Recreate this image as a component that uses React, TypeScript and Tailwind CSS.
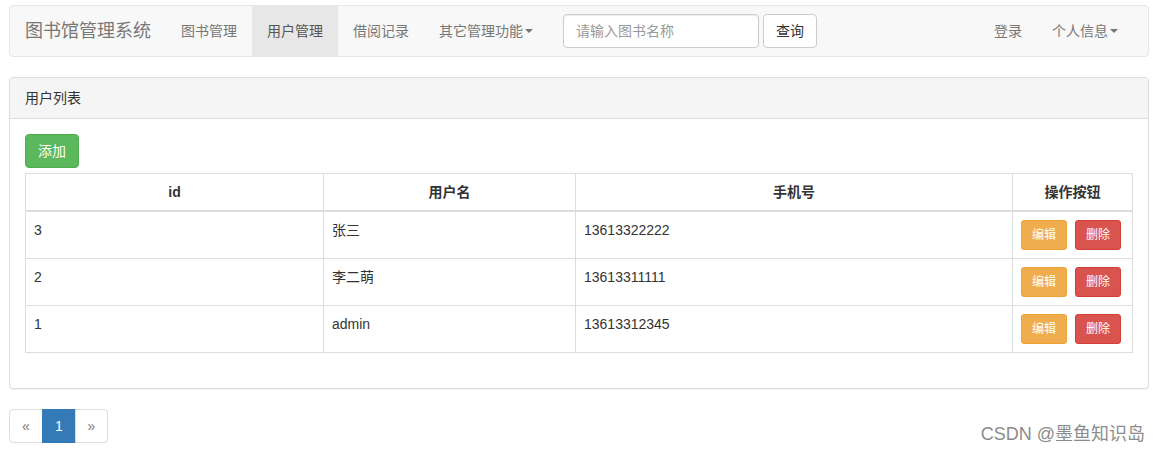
import React from "react";

const users = [
    { id: 3, name: "张三", phone: "13613322222" },
    { id: 2, name: "李二萌", phone: "13613311111" },
    { id: 1, name: "admin", phone: "13613312345" },
];

function Caret() {
    return <span className="inline-block ml-[2px] w-0 h-0 border-t-[4px] border-t-[#777] border-x-[4px] border-x-transparent align-middle"></span>;
}

function NavLink({ children, active }: { children: React.ReactNode; active?: boolean }) {
    return (
        <div className={`h-[50px] flex items-center px-[15px] ${active ? "bg-[#e7e7e7] text-[#555]" : "text-[#777]"}`}>
            {children}
        </div>
    );
}

function Navbar() {
    return (
        <div className="h-[52px] border border-[#e7e7e7] bg-[#f8f8f8] rounded-[4px] flex items-stretch">
            <div className="h-[50px] flex items-center px-[15px] text-[18px] text-[#777]">图书馆管理系统</div>
            <NavLink>图书管理</NavLink>
            <NavLink active>用户管理</NavLink>
            <NavLink>借阅记录</NavLink>
            <NavLink>
                其它管理功能
                <Caret />
            </NavLink>
            <div className="flex items-center px-[15px] gap-[4px]">
                <input
                    placeholder="请输入图书名称"
                    className="w-[196px] h-[34px] px-[12px] border border-[#ccc] rounded-[4px] bg-white text-[14px] text-[#555] placeholder:text-[#999] outline-none shadow-[inset_0_1px_1px_rgba(0,0,0,0.075)]"
                />
                <button className="h-[34px] px-[12px] border border-[#ccc] rounded-[4px] bg-white text-[14px] text-[#333]">查询</button>
            </div>
            <div className="ml-auto flex pr-[15px]">
                <NavLink>登录</NavLink>
                <NavLink>
                    个人信息
                    <Caret />
                </NavLink>
            </div>
        </div>
    );
}

function UserTable() {
    return (
        <table className="w-full table-fixed border-collapse border border-[#ddd] text-[14px] leading-[20px]">
            <colgroup>
                <col className="w-[298px]" />
                <col className="w-[252px]" />
                <col className="w-[437px]" />
                <col className="w-[120px]" />
            </colgroup>
            <thead>
                <tr>
                    {["id", "用户名", "手机号", "操作按钮"].map((h) => (
                        <th key={h} className="border border-[#ddd] border-b-2 p-[8px] text-center font-bold text-[#333]">
                            {h}
                        </th>
                    ))}
                </tr>
            </thead>
            <tbody>
                {users.map((u) => (
                    <tr key={u.id}>
                        <td className="border border-[#ddd] p-[8px] align-top h-[47px]">{u.id}</td>
                        <td className="border border-[#ddd] p-[8px] align-top">{u.name}</td>
                        <td className="border border-[#ddd] p-[8px] align-top">{u.phone}</td>
                        <td className="border border-[#ddd] p-[8px] align-top">
                            <div className="flex">
                                <button className="h-[30px] px-[10px] text-[12px] text-white bg-[#f0ad4e] border border-[#eea236] rounded-[3px]">编辑</button>
                                <button className="ml-[8px] h-[30px] px-[10px] text-[12px] text-white bg-[#d9534f] border border-[#d43f3a] rounded-[3px]">删除</button>
                            </div>
                        </td>
                    </tr>
                ))}
            </tbody>
        </table>
    );
}

function Pagination() {
    return (
        <div className="flex h-[34px] text-[14px]">
            <div className="w-[34px] flex items-center justify-center border border-[#ddd] rounded-l-[4px] text-[#777] bg-white">«</div>
            <div className="w-[34px] flex items-center justify-center border border-[#337ab7] bg-[#337ab7] text-white -ml-px">1</div>
            <div className="w-[33px] flex items-center justify-center border border-[#ddd] rounded-r-[4px] text-[#777] bg-white -ml-px">»</div>
        </div>
    );
}

export default function App() {
    return (
        <div
            className="relative min-h-[456px] bg-white text-[14px] text-[#333] leading-[20px] pt-[5px] pl-[9px] pr-[10px]"
            style={{ fontFamily: '"Liberation Sans", "Noto Sans CJK SC", sans-serif' }}
        >
            <Navbar />
            <div className="mt-[20px] border border-[#ddd] rounded-[4px] bg-white shadow-[0_1px_1px_rgba(0,0,0,0.05)]">
                <div className="bg-[#f5f5f5] border-b border-[#ddd] px-[15px] py-[10px] rounded-t-[3px]">用户列表</div>
                <div className="p-[15px]">
                    <div className="h-[39px]">
                        <button className="h-[34px] px-[12px] text-[14px] text-white bg-[#5cb85c] border border-[#4cae4c] rounded-[4px]">添加</button>
                    </div>
                    <UserTable />
                    <div className="h-[20px]"></div>
                </div>
            </div>
            <div className="mt-[20px]">
                <Pagination />
            </div>
            <div className="absolute right-[14px] bottom-[12px] text-[18px] leading-[20px] text-[#8c8c8c]">CSDN @墨鱼知识岛</div>
        </div>
    );
}
